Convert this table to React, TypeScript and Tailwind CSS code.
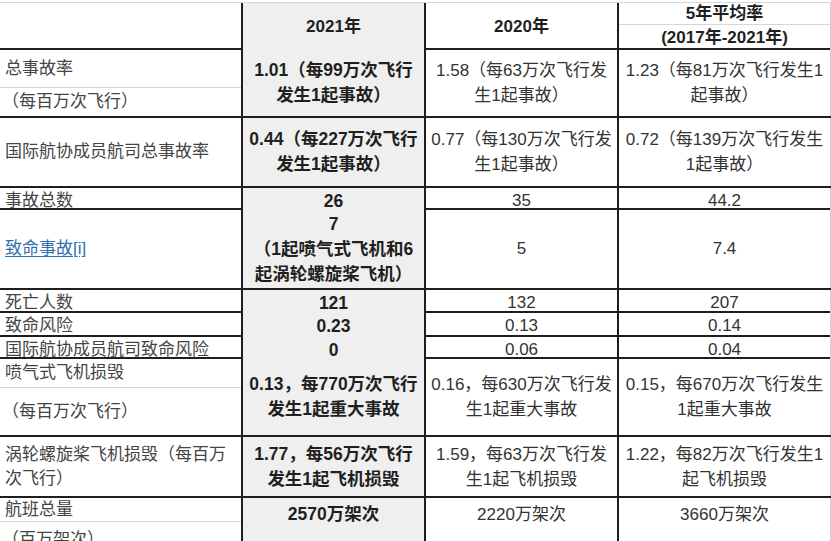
import React from "react"

const line = "border-[#1e1e1e]"

function Lines({ items }: { items: string[] }) {
  return (
    <div className="flex flex-col items-center">
      {items.map((t, i) => (
        <span key={i} className="whitespace-nowrap leading-[25px]">
          {t}
        </span>
      ))}
    </div>
  )
}

function Row({
  height,
  label,
  y2021,
  y2020,
  avg,
  last,
}: {
  height: string
  label: React.ReactNode
  y2021: React.ReactNode
  y2020: React.ReactNode
  avg: React.ReactNode
  last?: boolean
}) {
  return (
    <div className={`grid grid-cols-[243px_183px_193px_212px] ${height} ${last ? "" : "border-b-2"} ${line}`}>
      <div className={`border-r-2 ${line} flex flex-col text-[#444]`}>{label}</div>
      <div
        className={`border-r-2 ${line} bg-[#efefef] flex justify-center font-bold text-[17.5px] text-[#1f1f1f] ${
          last ? "items-start pt-[4px]" : "items-center"
        }`}
      >
        {y2021}
      </div>
      <div className={`border-r-2 ${line} flex justify-center ${last ? "items-start pt-[4px]" : "items-center"}`}>
        {y2020}
      </div>
      <div className={`border-r border-[#cfcfcf] flex justify-center ${last ? "items-start pt-[4px]" : "items-center"}`}>
        {avg}
      </div>
    </div>
  )
}

function Label({ text }: { text: string }) {
  return <div className="flex-1 flex items-center pl-[5px] whitespace-nowrap">{text}</div>
}

function SplitLabel({ top, bottom, topHeight }: { top: string; bottom: string; topHeight: string }) {
  return (
    <>
      <div className={`${topHeight} border-b border-[#d6d6d6] flex items-center pl-[5px] whitespace-nowrap`}>{top}</div>
      <div className="flex-1 flex items-center pl-[2px] whitespace-nowrap">{bottom}</div>
    </>
  )
}

export default function App() {
  return (
    <div className="w-[831px] h-[541px] overflow-hidden bg-white pt-[2px] font-['Liberation_Sans','Noto_Sans_CJK_SC',sans-serif] text-[17px] text-[#333]">
      <div className="border-t border-[#d6d6d6]">
        {/* header */}
        <div className={`grid grid-cols-[243px_183px_193px_212px] h-[47px] border-b-2 ${line} font-bold text-[17px] text-[#1f1f1f]`}>
          <div className={`border-r-2 ${line}`}></div>
          <div className={`border-r-2 ${line} bg-[#efefef] flex items-center justify-center`}>2021年</div>
          <div className={`border-r-2 ${line} flex items-center justify-center`}>2020年</div>
          <div className="border-r border-[#cfcfcf] flex flex-col">
            <div className="h-[22px] border-b border-[#d6d6d6] flex items-center justify-center">5年平均率</div>
            <div className="flex-1 flex items-center justify-center">(2017年-2021年)</div>
          </div>
        </div>

        <Row
          height="h-[68px]"
          label={<SplitLabel top="总事故率" bottom="（每百万次飞行）" topHeight="h-[38px]" />}
          y2021={<Lines items={["1.01（每99万次飞行", "发生1起事故）"]} />}
          y2020={<Lines items={["1.58（每63万次飞行发", "生1起事故）"]} />}
          avg={<Lines items={["1.23（每81万次飞行发生1", "起事故）"]} />}
        />
        <Row
          height="h-[70px]"
          label={<Label text="国际航协成员航司总事故率" />}
          y2021={<Lines items={["0.44（每227万次飞行", "发生1起事故）"]} />}
          y2020={<Lines items={["0.77（每130万次飞行发", "生1起事故）"]} />}
          avg={<Lines items={["0.72（每139万次飞行发生", "1起事故）"]} />}
        />
        <Row height="h-[22px]" label={<Label text="事故总数" />} y2021="26" y2020="35" avg="44.2" />
        <Row
          height="h-[80px]"
          label={
            <div className="flex-1 flex items-center pl-[5px]">
              <a href="#" className="text-[#2f6fb3] underline underline-offset-2">
                致命事故[i]
              </a>
            </div>
          }
          y2021={<Lines items={["7", "（1起喷气式飞机和6", "起涡轮螺旋桨飞机）"]} />}
          y2020="5"
          avg="7.4"
        />
        <Row height="h-[23px]" label={<Label text="死亡人数" />} y2021="121" y2020="132" avg="207" />
        <Row height="h-[24px]" label={<Label text="致命风险" />} y2021="0.23" y2020="0.13" avg="0.14" />
        <Row height="h-[22px]" label={<Label text="国际航协成员航司致命风险" />} y2021="0" y2020="0.06" avg="0.04" />
        <Row
          height="h-[78px]"
          label={<SplitLabel top="喷气式飞机损毁" bottom="（每百万次飞行）" topHeight="h-[29px]" />}
          y2021={<Lines items={["0.13，每770万次飞行", "发生1起重大事故"]} />}
          y2020={<Lines items={["0.16，每630万次飞行发", "生1起重大事故"]} />}
          avg={<Lines items={["0.15，每670万次飞行发生", "1起重大事故"]} />}
        />
        <Row
          height="h-[61px]"
          label={
            <div className="flex-1 flex flex-col justify-center pl-[5px] leading-[24px]">
              <span className="whitespace-nowrap">涡轮螺旋桨飞机损毁（每百万</span>
              <span>次飞行）</span>
            </div>
          }
          y2021={<Lines items={["1.77，每56万次飞行", "发生1起飞机损毁"]} />}
          y2020={<Lines items={["1.59，每63万次飞行发", "生1起飞机损毁"]} />}
          avg={<Lines items={["1.22，每82万次飞行发生1", "起飞机损毁"]} />}
        />
        <Row
          height="h-[60px]"
          last
          label={<SplitLabel top="航班总量" bottom="（百万架次）" topHeight="h-[24px]" />}
          y2021={<Lines items={["2570万架次"]} />}
          y2020={<Lines items={["2220万架次"]} />}
          avg={<Lines items={["3660万架次"]} />}
        />
      </div>
    </div>
  )
}
